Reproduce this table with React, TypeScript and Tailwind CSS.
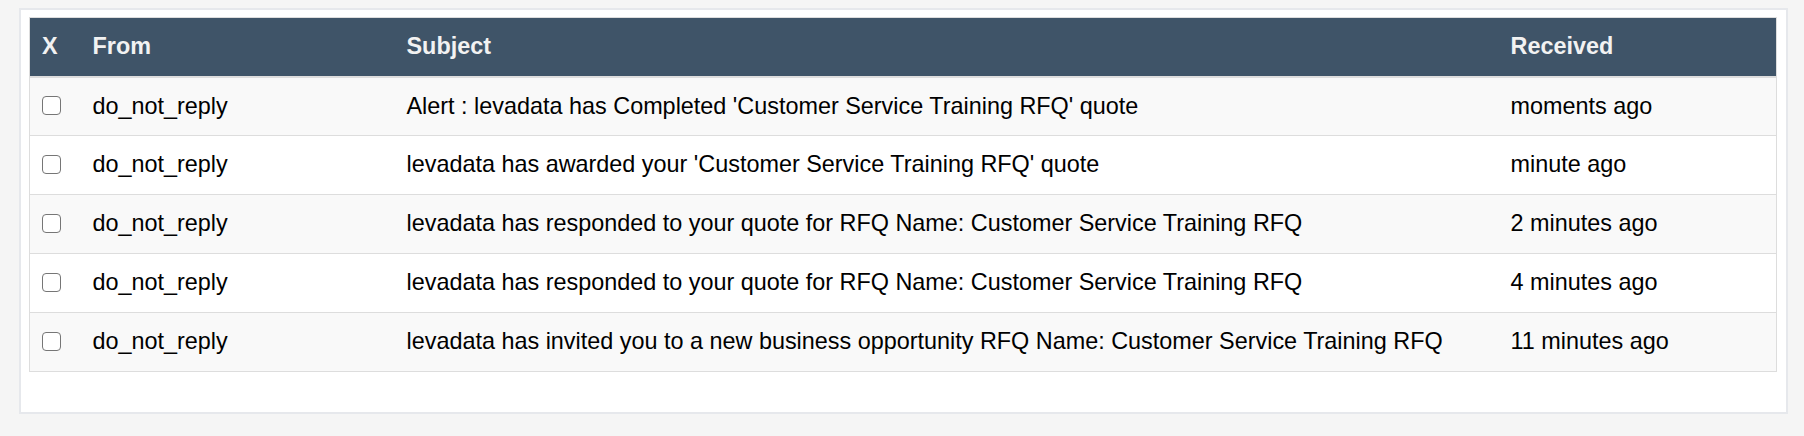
import React from 'react';

interface Message {
  from: string;
  subject: string;
  received: string;
}

const messages: Message[] = [
  { from: 'do_not_reply', subject: "Alert : levadata has Completed 'Customer Service Training RFQ' quote", received: 'moments ago' },
  { from: 'do_not_reply', subject: "levadata has awarded your 'Customer Service Training RFQ' quote", received: 'minute ago' },
  { from: 'do_not_reply', subject: 'levadata has responded to your quote for RFQ Name: Customer Service Training RFQ', received: '2 minutes ago' },
  { from: 'do_not_reply', subject: 'levadata has responded to your quote for RFQ Name: Customer Service Training RFQ', received: '4 minutes ago' },
  { from: 'do_not_reply', subject: 'levadata has invited you to a new business opportunity RFQ Name: Customer Service Training RFQ', received: '11 minutes ago' },
];

export default function App() {
  return (
    <div
      className="min-h-[436px] bg-[#f5f5f5] pt-[8px] pl-[19px]"
      style={{ fontFamily: '"Liberation Sans", Arial, sans-serif' }}
    >
      {/* Inbox card */}
      <div className="w-[1769px] h-[406px] border-2 border-[#e6e8ec] bg-white pt-[7px] pl-[8px] pr-[9px]">
        <table className="w-full table-fixed border-collapse border border-[#dddddd] text-[23.4px] text-black">
          <colgroup>
            <col className="w-[51px]" />
            <col className="w-[314px]" />
            <col className="w-[1104px]" />
            <col />
          </colgroup>
          <thead>
            <tr className="h-[59px] bg-[#3f5468] text-[#f2f2f2] border-b-2 border-[#dddddd]">
              <th className="pl-[12px] text-left font-bold">X</th>
              <th className="pl-[12px] text-left font-bold">From</th>
              <th className="pl-[12px] text-left font-bold">Subject</th>
              <th className="pl-[12px] text-left font-bold">Received</th>
            </tr>
          </thead>
          <tbody>
            {messages.map((m, i) => (
              <tr
                key={i}
                className={`h-[59px] border-t border-[#dddddd] ${i % 2 === 0 ? 'bg-[#f9f9f9]' : 'bg-white'}`}
              >
                <td className="pl-[12px] align-middle">
                  <span className="block w-[19px] h-[19px] rounded-[4px] border border-[#767676] bg-white -mt-[2px]" />
                </td>
                <td className="pl-[12px] whitespace-nowrap">{m.from}</td>
                <td className="pl-[12px] whitespace-nowrap">{m.subject}</td>
                <td className="pl-[12px] whitespace-nowrap">{m.received}</td>
              </tr>
            ))}
          </tbody>
        </table>
      </div>
    </div>
  );
}
